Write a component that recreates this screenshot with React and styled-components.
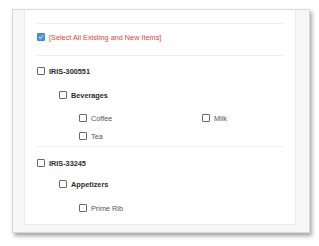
import React from 'react';
import styled, { createGlobalStyle } from 'styled-components';

const Global = createGlobalStyle`
  html, body {
    margin: 0;
    padding: 0;
    background: #ffffff;
  }
  body {
    font-family: "Liberation Sans", Arial, sans-serif;
  }
`;

const Page = styled.div`
  width: 319px;
  height: 246px;
  box-sizing: border-box;
  padding: 9px 0 0 12px;
  overflow: hidden;
`;

const Card = styled.div`
  width: 298px;
  height: 224px;
  box-sizing: border-box;
  background: #f7f7f7;
  border: 1px solid #d9d9d9;
  box-shadow: 2px 3px 4px rgba(0, 0, 0, 0.35);
  display: flex;
  align-items: flex-start;
  padding-left: 11px;
`;

const Panel = styled.div`
  width: 272px;
  height: 215px;
  box-sizing: border-box;
  background: #ffffff;
  border: 1px solid #ececec;
  border-top: none;
  padding: 13px 12px 0 12px;
  display: flex;
  flex-direction: column;
`;

const Rule = styled.div`
  height: 1px;
  background: #ededed;
  margin-top: ${p => p.$top || 0}px;
`;

const Row = styled.label`
  display: flex;
  align-items: center;
  height: 12px;
  gap: 4px;
  margin-top: ${p => p.$top || 0}px;
  padding-left: ${p => p.$indent || 0}px;
`;

const Box = styled.span`
  width: 8px;
  height: 8px;
  box-sizing: border-box;
  border: 1px solid ${p => (p.$checked ? '#3f86d6' : '#6a6a6a')};
  border-radius: 1px;
  background: ${p => (p.$checked ? '#4a90dc' : '#ffffff')};
  display: flex;
  align-items: center;
  justify-content: center;
  flex-shrink: 0;
`;

const Text = styled.span`
  font-size: 7.3px;
  color: ${p => (p.$red ? '#e2443d' : p.$bold ? '#2b2b2b' : '#555555')};
  font-weight: ${p => (p.$bold ? 700 : 400)};
  white-space: nowrap;
`;

const Items = styled.div`
  display: grid;
  grid-template-columns: 123px 1fr;
  padding-left: 42px;
  margin-top: ${p => p.$top || 0}px;
  row-gap: 6px;
`;

const ItemRow = styled(Row)`
  padding-left: 0;
  margin-top: 0;
`;

const Check = ({ checked, children, red, bold, top, indent }) => (
  <Row $top={top} $indent={indent}>
    <Box $checked={checked}>
      {checked && (
        <svg width="6" height="6" viewBox="0 0 6 6">
          <path d="M1 3.2 L2.4 4.5 L5 1.5" fill="none" stroke="#fff" strokeWidth="1" />
        </svg>
      )}
    </Box>
    <Text $red={red} $bold={bold}>{children}</Text>
  </Row>
);

const Item = ({ children }) => (
  <ItemRow>
    <Box />
    <Text>{children}</Text>
  </ItemRow>
);

export default function App() {
  return (
    <>
      <Global />
      <Page>
        <Card>
          <Panel>
            <Rule />
            <Check checked red top={7}>[Select All Existing and New Items]</Check>
            <Rule $top={12} />
            <Check bold top={9}>IRIS-300551</Check>
            <Check bold top={12} indent={22}>Beverages</Check>
            <Items $top={11}>
              <Item>Coffee</Item>
              <Item>Milk</Item>
              <Item>Tea</Item>
            </Items>
            <Rule $top={4} />
            <Check bold top={10}>IRIS-33245</Check>
            <Check bold top={9} indent={22}>Appetizers</Check>
            <Items $top={12}>
              <Item>Prime Rib</Item>
            </Items>
          </Panel>
        </Card>
      </Page>
    </>
  );
}
